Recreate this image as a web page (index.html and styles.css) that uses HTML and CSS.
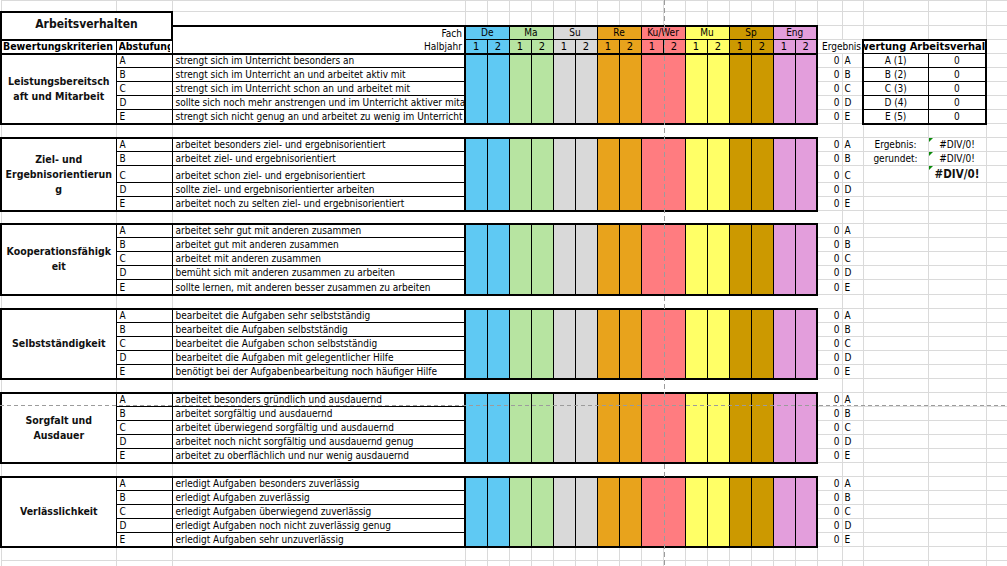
FILE: index.html
```html
<!DOCTYPE html>
<html lang="de">
<head>
<meta charset="utf-8">
<title>Arbeitsverhalten</title>
<link rel="stylesheet" href="styles.css">
</head>
<body>
<div class="sheet">
<table>
<colgroup>
<col class="cA"><col class="cB"><col class="cC">
<col class="cS"><col class="cS"><col class="cS"><col class="cS"><col class="cS"><col class="cS"><col class="cS"><col class="cS">
<col class="cS"><col class="cS"><col class="cS"><col class="cS"><col class="cS"><col class="cS"><col class="cS"><col class="cS">
<col class="cD"><col class="cE"><col class="cF"><col class="cG"><col class="cH">
</colgroup>
<tbody>
<tr class="r11"><td></td><td></td><td></td><td></td><td></td><td></td><td></td><td></td><td></td><td></td><td></td><td></td><td></td><td></td><td></td><td></td><td></td><td></td><td></td><td></td><td></td><td></td><td></td><td></td></tr>
<tr class="r14"><td class="title" colspan="2" rowspan="2">Arbeitsverhalten</td><td></td><td></td><td></td><td></td><td></td><td></td><td></td><td></td><td></td><td></td><td></td><td></td><td></td><td></td><td></td><td></td><td></td><td></td><td></td><td></td><td></td><td></td></tr>
<tr class="r14"><td class="fach">Fach</td><td class="sh de" colspan="2">De</td><td class="sh ma" colspan="2">Ma</td><td class="sh su" colspan="2">Su</td><td class="sh re" colspan="2">Re</td><td class="sh kw" colspan="2">Ku/Wer</td><td class="sh mu" colspan="2">Mu</td><td class="sh sp" colspan="2">Sp</td><td class="sh en end" colspan="2">Eng</td><td></td><td></td><td></td><td></td><td></td></tr>
<tr class="r14"><td class="hk">Bewertungskriterien</td><td class="ha"><div class="clip">Abstufung</div></td><td class="hj">Halbjahr</td><td class="hn de">1</td><td class="hn de">2</td><td class="hn ma">1</td><td class="hn ma">2</td><td class="hn su">1</td><td class="hn su">2</td><td class="hn re">1</td><td class="hn re">2</td><td class="hn kw">1</td><td class="hn kw">2</td><td class="hn mu">1</td><td class="hn mu">2</td><td class="hn sp">1</td><td class="hn sp">2</td><td class="hn en">1</td><td class="hn en end">2</td><td class="erg" colspan="2"><div class="clip">Ergebnis</div></td><td class="rth" colspan="2"><div class="cc">Bewertung Arbeitsverhalten</div></td><td></td></tr>

<!-- Block 1 -->
<tr class="r14"><td class="crit" rowspan="5">Leistungsbereitsch<br>aft und Mitarbeit</td><td class="ab">A</td><td class="ds">strengt sich im Unterricht besonders an</td><td class="s de" rowspan="5"></td><td class="s de" rowspan="5"></td><td class="s ma" rowspan="5"></td><td class="s ma" rowspan="5"></td><td class="s su" rowspan="5"></td><td class="s su" rowspan="5"></td><td class="s re" rowspan="5"></td><td class="s re" rowspan="5"></td><td class="s kw nr" rowspan="5"></td><td class="s kw" rowspan="5"></td><td class="s mu" rowspan="5"></td><td class="s mu" rowspan="5"></td><td class="s sp" rowspan="5"></td><td class="s sp" rowspan="5"></td><td class="s en" rowspan="5"></td><td class="s en end" rowspan="5"></td><td class="n">0</td><td class="l">A</td><td class="rt1">A (1)</td><td class="rt2">0</td><td></td></tr>
<tr class="r14"><td class="ab">B</td><td class="ds">strengt sich im Unterricht an und arbeitet aktiv mit</td><td class="n">0</td><td class="l">B</td><td class="rt1">B (2)</td><td class="rt2">0</td><td></td></tr>
<tr class="r14"><td class="ab">C</td><td class="ds">strengt sich im Unterricht schon an und arbeitet mit</td><td class="n">0</td><td class="l">C</td><td class="rt1">C (3)</td><td class="rt2">0</td><td></td></tr>
<tr class="r14"><td class="ab">D</td><td class="ds">sollte sich noch mehr anstrengen und im Unterricht aktiver mitarbeiten</td><td class="n">0</td><td class="l">D</td><td class="rt1">D (4)</td><td class="rt2">0</td><td></td></tr>
<tr class="r14"><td class="ab">E</td><td class="ds">strengt sich nicht genug an und arbeitet zu wenig im Unterricht mit</td><td class="n">0</td><td class="l">E</td><td class="rt1 tb">E (5)</td><td class="rt2 tb">0</td><td></td></tr>
<tr class="r14"><td class="tt tb"></td><td class="tt tb"></td><td class="tt tb nr"></td><td class="tt tb nx" colspan="16"></td><td class="nl"></td><td></td><td></td><td></td><td></td></tr>

<!-- Block 2 -->
<tr class="r14"><td class="crit" rowspan="5">Ziel- und<br>Ergebnisorientierun<br>g</td><td class="ab">A</td><td class="ds">arbeitet besonders ziel- und ergebnisorientiert</td><td class="s de" rowspan="5"></td><td class="s de" rowspan="5"></td><td class="s ma" rowspan="5"></td><td class="s ma" rowspan="5"></td><td class="s su" rowspan="5"></td><td class="s su" rowspan="5"></td><td class="s re" rowspan="5"></td><td class="s re" rowspan="5"></td><td class="s kw nr" rowspan="5"></td><td class="s kw" rowspan="5"></td><td class="s mu" rowspan="5"></td><td class="s mu" rowspan="5"></td><td class="s sp" rowspan="5"></td><td class="s sp" rowspan="5"></td><td class="s en" rowspan="5"></td><td class="s en end" rowspan="5"></td><td class="n">0</td><td class="l">A</td><td class="c">Ergebnis:</td><td class="c err">#DIV/0!</td><td></td></tr>
<tr class="r14"><td class="ab">B</td><td class="ds">arbeitet ziel- und ergebnisorientiert</td><td class="n">0</td><td class="l">B</td><td class="c">gerundet:</td><td class="c err">#DIV/0!</td><td></td></tr>
<tr class="r17"><td class="ab">C</td><td class="ds">arbeitet schon ziel- und ergebnisorientiert</td><td class="n">0</td><td class="l">C</td><td></td><td class="c err big">#DIV/0!</td><td></td></tr>
<tr class="r14"><td class="ab">D</td><td class="ds">sollte ziel- und ergebnisorientierter arbeiten</td><td class="n">0</td><td class="l">D</td><td></td><td></td><td></td></tr>
<tr class="r14"><td class="ab">E</td><td class="ds">arbeitet noch zu selten ziel- und ergebnisorientiert</td><td class="n">0</td><td class="l">E</td><td></td><td></td><td></td></tr>
<tr class="r13"><td class="tt tb"></td><td class="tt tb"></td><td class="tt tb nr"></td><td class="tt tb nx" colspan="16"></td><td class="nl"></td><td></td><td></td><td></td><td></td></tr>

<!-- Block 3 -->
<tr class="r14"><td class="crit" rowspan="5">Kooperationsfähigk<br>eit</td><td class="ab">A</td><td class="ds">arbeitet sehr gut mit anderen zusammen</td><td class="s de" rowspan="5"></td><td class="s de" rowspan="5"></td><td class="s ma" rowspan="5"></td><td class="s ma" rowspan="5"></td><td class="s su" rowspan="5"></td><td class="s su" rowspan="5"></td><td class="s re" rowspan="5"></td><td class="s re" rowspan="5"></td><td class="s kw nr" rowspan="5"></td><td class="s kw" rowspan="5"></td><td class="s mu" rowspan="5"></td><td class="s mu" rowspan="5"></td><td class="s sp" rowspan="5"></td><td class="s sp" rowspan="5"></td><td class="s en" rowspan="5"></td><td class="s en end" rowspan="5"></td><td class="n">0</td><td class="l">A</td><td></td><td></td><td></td></tr>
<tr class="r14"><td class="ab">B</td><td class="ds">arbeitet gut mit anderen zusammen</td><td class="n">0</td><td class="l">B</td><td></td><td></td><td></td></tr>
<tr class="r14"><td class="ab">C</td><td class="ds">arbeitet mit anderen zusammen</td><td class="n">0</td><td class="l">C</td><td></td><td></td><td></td></tr>
<tr class="r14"><td class="ab">D</td><td class="ds">bemüht sich mit anderen zusammen zu arbeiten</td><td class="n">0</td><td class="l">D</td><td></td><td></td><td></td></tr>
<tr class="r15"><td class="ab">E</td><td class="ds">sollte lernen, mit anderen besser zusammen zu arbeiten</td><td class="n">0</td><td class="l">E</td><td></td><td></td><td></td></tr>
<tr class="r14"><td class="tt tb"></td><td class="tt tb"></td><td class="tt tb nr"></td><td class="tt tb nx" colspan="16"></td><td class="nl"></td><td></td><td></td><td></td><td></td></tr>

<!-- Block 4 -->
<tr class="r14"><td class="crit" rowspan="5">Selbstständigkeit</td><td class="ab">A</td><td class="ds">bearbeitet die Aufgaben sehr selbstständig</td><td class="s de" rowspan="5"></td><td class="s de" rowspan="5"></td><td class="s ma" rowspan="5"></td><td class="s ma" rowspan="5"></td><td class="s su" rowspan="5"></td><td class="s su" rowspan="5"></td><td class="s re" rowspan="5"></td><td class="s re" rowspan="5"></td><td class="s kw nr" rowspan="5"></td><td class="s kw" rowspan="5"></td><td class="s mu" rowspan="5"></td><td class="s mu" rowspan="5"></td><td class="s sp" rowspan="5"></td><td class="s sp" rowspan="5"></td><td class="s en" rowspan="5"></td><td class="s en end" rowspan="5"></td><td class="n">0</td><td class="l">A</td><td></td><td></td><td></td></tr>
<tr class="r14"><td class="ab">B</td><td class="ds">bearbeitet die Aufgaben selbstständig</td><td class="n">0</td><td class="l">B</td><td></td><td></td><td></td></tr>
<tr class="r14"><td class="ab">C</td><td class="ds">bearbeitet die Aufgaben schon selbstständig</td><td class="n">0</td><td class="l">C</td><td></td><td></td><td></td></tr>
<tr class="r14"><td class="ab">D</td><td class="ds">bearbeitet die Aufgaben mit gelegentlicher Hilfe</td><td class="n">0</td><td class="l">D</td><td></td><td></td><td></td></tr>
<tr class="r14"><td class="ab">E</td><td class="ds">benötigt bei der Aufgabenbearbeitung noch häufiger Hilfe</td><td class="n">0</td><td class="l">E</td><td></td><td></td><td></td></tr>
<tr class="r14"><td class="tt tb"></td><td class="tt tb"></td><td class="tt tb nr"></td><td class="tt tb nx" colspan="16"></td><td class="nl"></td><td></td><td></td><td></td><td></td></tr>

<!-- Block 5 -->
<tr class="r14"><td class="crit" rowspan="5">Sorgfalt und<br>Ausdauer</td><td class="ab">A</td><td class="ds">arbeitet besonders gründlich und ausdauernd</td><td class="s de" rowspan="5"></td><td class="s de" rowspan="5"></td><td class="s ma" rowspan="5"></td><td class="s ma" rowspan="5"></td><td class="s su" rowspan="5"></td><td class="s su" rowspan="5"></td><td class="s re" rowspan="5"></td><td class="s re" rowspan="5"></td><td class="s kw nr" rowspan="5"></td><td class="s kw" rowspan="5"></td><td class="s mu" rowspan="5"></td><td class="s mu" rowspan="5"></td><td class="s sp" rowspan="5"></td><td class="s sp" rowspan="5"></td><td class="s en" rowspan="5"></td><td class="s en end" rowspan="5"></td><td class="n">0</td><td class="l">A</td><td></td><td></td><td></td></tr>
<tr class="r14"><td class="ab">B</td><td class="ds">arbeitet sorgfältig und ausdauernd</td><td class="n">0</td><td class="l">B</td><td></td><td></td><td></td></tr>
<tr class="r14"><td class="ab">C</td><td class="ds">arbeitet überwiegend sorgfältig und ausdauernd</td><td class="n">0</td><td class="l">C</td><td></td><td></td><td></td></tr>
<tr class="r14"><td class="ab">D</td><td class="ds">arbeitet noch nicht sorgfältig und ausdauernd genug</td><td class="n">0</td><td class="l">D</td><td></td><td></td><td></td></tr>
<tr class="r14"><td class="ab">E</td><td class="ds">arbeitet zu oberflächlich und nur wenig ausdauernd</td><td class="n">0</td><td class="l">E</td><td></td><td></td><td></td></tr>
<tr class="r14"><td class="tt tb"></td><td class="tt tb"></td><td class="tt tb nr"></td><td class="tt tb nx" colspan="16"></td><td class="nl"></td><td></td><td></td><td></td><td></td></tr>

<!-- Block 6 -->
<tr class="r14"><td class="crit" rowspan="5">Verlässlichkeit</td><td class="ab">A</td><td class="ds">erledigt Aufgaben besonders zuverlässig</td><td class="s de" rowspan="5"></td><td class="s de" rowspan="5"></td><td class="s ma" rowspan="5"></td><td class="s ma" rowspan="5"></td><td class="s su" rowspan="5"></td><td class="s su" rowspan="5"></td><td class="s re" rowspan="5"></td><td class="s re" rowspan="5"></td><td class="s kw nr" rowspan="5"></td><td class="s kw" rowspan="5"></td><td class="s mu" rowspan="5"></td><td class="s mu" rowspan="5"></td><td class="s sp" rowspan="5"></td><td class="s sp" rowspan="5"></td><td class="s en" rowspan="5"></td><td class="s en end" rowspan="5"></td><td class="n">0</td><td class="l">A</td><td></td><td></td><td></td></tr>
<tr class="r14"><td class="ab">B</td><td class="ds">erledigt Aufgaben zuverlässig</td><td class="n">0</td><td class="l">B</td><td></td><td></td><td></td></tr>
<tr class="r14"><td class="ab">C</td><td class="ds">erledigt Aufgaben überwiegend zuverlässig</td><td class="n">0</td><td class="l">C</td><td></td><td></td><td></td></tr>
<tr class="r14"><td class="ab">D</td><td class="ds">erledigt Aufgaben noch nicht zuverlässig genug</td><td class="n">0</td><td class="l">D</td><td></td><td></td><td></td></tr>
<tr class="r14"><td class="ab">E</td><td class="ds">erledigt Aufgaben sehr unzuverlässig</td><td class="n">0</td><td class="l">E</td><td></td><td></td><td></td></tr>
<tr class="r14"><td class="tt"></td><td class="tt"></td><td class="tt"></td><td class="tt"></td><td class="tt"></td><td class="tt"></td><td class="tt"></td><td class="tt"></td><td class="tt"></td><td class="tt"></td><td class="tt"></td><td class="tt"></td><td class="tt"></td><td class="tt"></td><td class="tt"></td><td class="tt"></td><td class="tt"></td><td class="tt"></td><td class="tt"></td><td></td><td></td><td></td><td></td><td></td></tr>
<tr class="r14"><td></td><td></td><td></td><td></td><td></td><td></td><td></td><td></td><td></td><td></td><td></td><td></td><td></td><td></td><td></td><td></td><td></td><td></td><td></td><td></td><td></td><td></td><td></td><td></td></tr>
</tbody>
</table>
<div class="pb-v"></div>
<div class="pb-h"></div>
</div>
</body>
</html>
```

FILE: styles.css
```css
html, body {
  margin: 0;
  padding: 0;
  background: #fff;
  overflow: hidden;
}
body {
  font-family: "DejaVu Sans Condensed", "DejaVu Sans", "Liberation Sans", sans-serif;
  font-stretch: condensed;
  font-size: 10px;
  color: #000;
}
.sheet {
  position: relative;
  width: 1007px;
  height: 566px;
  overflow: hidden;
}
table {
  border-collapse: collapse;
  table-layout: fixed;
  width: 1049px;
}
.cA { width: 115px; }
.cB { width: 56px; }
.cC { width: 293px; }
.cS { width: 22px; }
.cD { width: 25px; }
.cE { width: 21px; }
.cF { width: 65px; }
.cG { width: 58px; }
.cH { width: 64px; }

td {
  border: 1px solid #dadada;
  padding: 0 2px 1px 2px;
  white-space: nowrap;
  overflow: hidden;
  vertical-align: bottom;
  line-height: 11px;
}
.r11 { height: 11px; }
.r13 { height: 13px; }
.r14 { height: 14px; }
.r15 { height: 15px; }
.r17 { height: 17px; }

/* header */
.title {
  border: 2px solid #000;
  text-align: center;
  vertical-align: middle;
  font-weight: bold;
  font-size: 12px;
  color: #111;
  padding-bottom: 2px;
}
.fach {
  border-top: 2px solid #000;
  border-right: 2px solid #000;
  border-bottom: none;
  text-align: right;
}
.hj {
  border-top: none;
  border-right: 2px solid #000;
  border-bottom: 2px solid #000;
  text-align: right;
}
.sh {
  border-top: 2px solid #000;
  border-right: 1px solid #000;
  border-bottom: 1px solid #000;
  text-align: center;
}
.hn {
  border-right: 1px solid #000;
  border-bottom: 2px solid #000;
  text-align: center;
  font-size: 11px;
}
.sh.end, .hn.end, .s.end { border-right: 2px solid #000; }
.hk {
  border-left: 2px solid #000;
  border-right: 1px solid #000;
  border-bottom: 2px solid #000;
  font-weight: bold;
  font-size: 10.5px;
  padding-left: 1px;
}
.ha {
  border-right: 1px solid #000;
  border-bottom: 2px solid #000;
  font-weight: bold;
  font-size: 10.5px;
}
.clip { overflow: hidden; }
.erg { text-align: left; padding-left: 4px; padding-right: 0; }
.rth {
  border-top: 2px solid #000;
  border-left: 2px solid #000;
  border-right: 2px solid #000;
  border-bottom: 1px solid #000;
  font-weight: bold;
  font-size: 11px;
  padding: 0 0 1px 0;
}
.cc {
  display: flex;
  justify-content: center;
  overflow: hidden;
  white-space: nowrap;
}

/* body */
.crit {
  border-left: 2px solid #000;
  border-right: 1px solid #000;
  text-align: center;
  vertical-align: middle;
  white-space: normal;
  font-weight: bold;
  font-size: 10.5px;
  line-height: 15px;
  padding: 0 1px;
  color: #111;
}
.ab {
  border-right: 1px solid #000;
  border-bottom: 1px solid #000;
  padding-left: 3px;
}
.ds {
  border-bottom: 1px solid #000;
  border-right: 2px solid #000;
  padding-left: 3px;
}
.s {
  border-left: none;
  border-right: 1px solid #000;
}
.s.nr { border-right: none; }
.de { background: #5fc9f3; }
.ma { background: #b7e4a1; }
.su { background: #d9d9d9; }
.re { background: #e8a31c; }
.kw { background: #ff7c80; }
.mu { background: #ffff66; }
.sp { background: #cc9900; }
.en { background: #e39edc; }

.n { text-align: right; padding-right: 2px; }
.l { text-align: left; padding-left: 2px; }
.c { text-align: center; }
.rt1 {
  border-left: 2px solid #000;
  border-right: 1px solid #000;
  border-bottom: 1px solid #000;
  text-align: center;
}
.rt2 {
  border-right: 2px solid #000;
  border-bottom: 1px solid #000;
  text-align: center;
}
.tt { border-top: 2px solid #000; }
.tb { border-bottom: 2px solid #000; }
.rt1.tb, .rt2.tb { border-bottom: 2px solid #000; }
.nr { border-right: none; }
.nl { border-left: none; }
.nx { border-left: none; border-right: none; }

.err { position: relative; }
.err::before {
  content: "";
  position: absolute;
  left: 0;
  top: 0;
  border-top: 4px solid #0a8a0a;
  border-right: 4px solid transparent;
}
.big {
  font-weight: bold;
  font-size: 11.5px;
  color: #111;
  padding-bottom: 2px;
}

/* page break markers */
.pb-v {
  position: absolute;
  left: 664px;
  top: 0;
  width: 1px;
  height: 566px;
  background: repeating-linear-gradient(to bottom, #9c9c9c 0 5px, transparent 5px 8px);
}
.pb-h {
  position: absolute;
  left: 0;
  top: 405px;
  width: 1007px;
  height: 1px;
  background: repeating-linear-gradient(to right, #9c9c9c 0 4px, transparent 4px 7px);
}
```
